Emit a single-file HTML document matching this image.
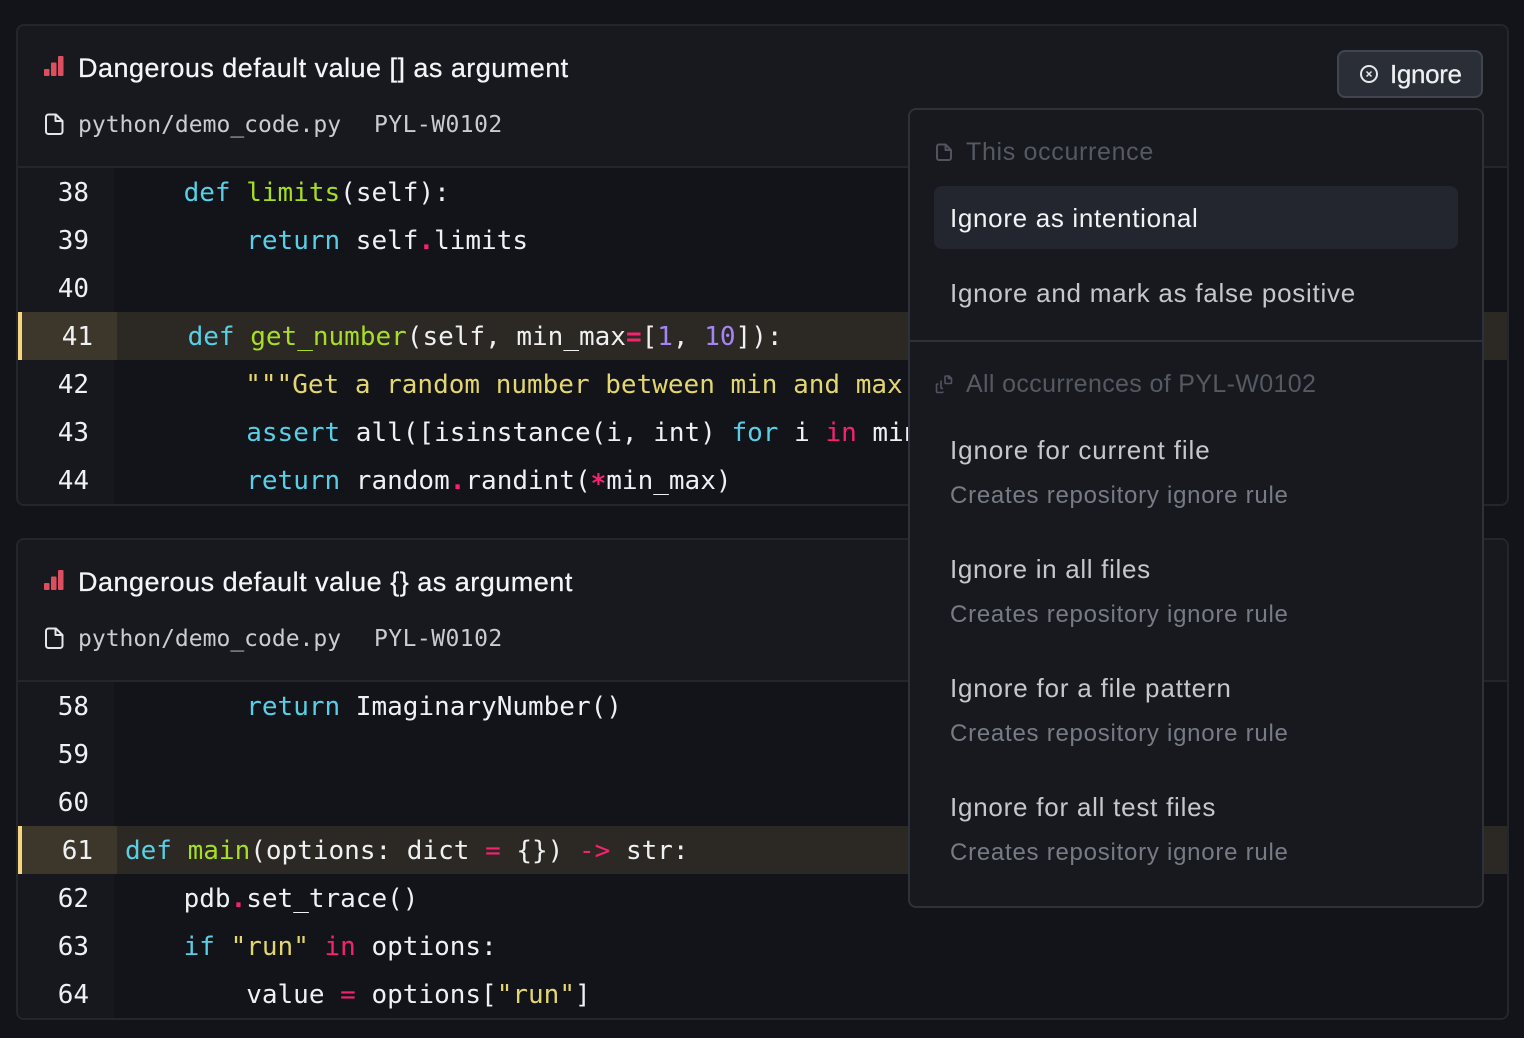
<!DOCTYPE html>
<html lang="en"><head><meta charset="utf-8"><title>Issues</title>
<style>
*{box-sizing:border-box;margin:0;padding:0}
html,body{width:1524px;height:1038px;overflow:hidden;background:#12141a}
body{position:relative;font-family:"Liberation Sans",sans-serif}
.a{position:absolute}
.card{position:absolute;left:16px;width:1493px;height:482px;border:2px solid #23262d;border-radius:8px;overflow:hidden;background:#12141a}
.head{position:absolute;left:0;top:0;width:100%;height:142px;background:#17191f;border-bottom:2px solid #23262d}
.gut{position:absolute;left:0;top:142px;width:96px;bottom:0;background:#16181d}
.hl{position:absolute;left:0;width:100%;height:48px;background:#2c2924}
.hlg{position:absolute;left:0;width:99px;height:48px;background:#3d372b;border-left:4px solid #f6d57f}
.title{position:absolute;left:78px;font-size:27px;line-height:40px;color:#f4f5f6;white-space:nowrap;letter-spacing:.47px;-webkit-text-stroke:.25px #f4f5f6}
.mono{position:absolute;font-family:"DejaVu Sans Mono",monospace;font-size:23px;line-height:40px;color:#c9ccd1;white-space:pre}
.ln,.code{position:absolute;font-family:"DejaVu Sans Mono",monospace;font-size:26px;line-height:48px;white-space:pre;color:#eef0f2}
.ln{width:40px;text-align:right}
.k{color:#58cfe6}.f{color:#a6de23}.p{color:#f5236f;font-weight:bold}.i{color:#f5236f}.n{color:#a585f5}.s{color:#e3d56f}
.st{position:relative;top:3px}
.panel{position:absolute;left:908px;top:108px;width:576px;height:800px;background:#17191f;border:2px solid #2d3139;border-radius:8px}
.ph{position:absolute;left:966px;font-size:25px;line-height:36px;color:#555962;white-space:nowrap;letter-spacing:.6px}
.it{position:absolute;left:950px;font-size:26px;line-height:40px;color:#c5c7cb;white-space:nowrap;letter-spacing:.68px}
.sub{position:absolute;left:950px;font-size:24px;line-height:36px;color:#777b85;white-space:nowrap;letter-spacing:.75px}
svg{position:absolute;overflow:visible}
</style></head><body>

<div class="card" style="top:24px"><div class="head"></div><div class="gut"></div></div>
<div class="card" style="top:538px"><div class="head"></div><div class="gut"></div></div>

<div class="hl" style="top:312px;left:18px;width:1489px"></div><div class="hlg" style="top:312px;left:18px"></div>
<div class="hl" style="top:826px;left:18px;width:1489px"></div><div class="hlg" style="top:826px;left:18px"></div>

<svg style="left:0;top:0" width="1524" height="1038" fill="none">
<g fill="#dc4f5e"><rect x="44" y="69" width="5.500" height="7" rx="1"/><rect x="51" y="62.500" width="5.500" height="13.500" rx="1"/><rect x="58" y="56" width="5.500" height="20" rx="1"/>
<rect x="44" y="583" width="5.500" height="7" rx="1"/><rect x="51" y="576.500" width="5.500" height="13.500" rx="1"/><rect x="58" y="570" width="5.500" height="20" rx="1"/></g>
<g stroke="#e4e6ea" stroke-width="2" stroke-linejoin="round"><path d="M48.500 114.500h7.500l6.500 6.500v10.500a2.500 2.500 0 0 1-2.500 2.500h-11.500a2.500 2.500 0 0 1-2.500-2.500v-14.500a2.500 2.500 0 0 1 2.500-2.500zM55.500 114.500v6.500h7"/>
<path d="M48.500 628.500h7.500l6.500 6.500v10.500a2.500 2.500 0 0 1-2.500 2.500h-11.500a2.500 2.500 0 0 1-2.500-2.500v-14.500a2.500 2.500 0 0 1 2.500-2.500zM55.500 628.500v6.500h7"/></g>
</svg>

<div class="title" style="top:48px">Dangerous default value [] as argument</div>
<div class="mono" style="left:78px;top:105px">python/demo_code.py</div>
<div class="mono" style="left:374px;top:105px;letter-spacing:.45px">PYL-W0102</div>
<div class="title" style="top:562px;letter-spacing:.5px">Dangerous default value {} as argument</div>
<div class="mono" style="left:78px;top:619px">python/demo_code.py</div>
<div class="mono" style="left:374px;top:619px;letter-spacing:.45px">PYL-W0102</div>

<div class="ln" style="left:49px;top:169px">38</div>
<div class="ln" style="left:49px;top:217px">39</div>
<div class="ln" style="left:49px;top:265px">40</div>
<div class="ln" style="left:53px;top:313px">41</div>
<div class="ln" style="left:49px;top:361px">42</div>
<div class="ln" style="left:49px;top:409px">43</div>
<div class="ln" style="left:49px;top:457px">44</div>
<div class="code" style="left:121px;top:169px">    <span class="k">def</span> <span class="f">limits</span>(self):</div>
<div class="code" style="left:121px;top:217px">        <span class="k">return</span> self<span class="p">.</span>limits</div>
<div class="code" style="left:125px;top:313px">    <span class="k">def</span> <span class="f">get_number</span>(self, min_max<span class="p">=</span>[<span class="n">1</span>, <span class="n">10</span>]):</div>
<div class="code" style="left:121px;top:361px">        <span class="s" style="margin-left:-1px">"""</span><span class="s">Get a random number between min and max</span></div>
<div class="code" style="left:121px;top:409px">        <span class="k">assert</span> all([isinstance(i, int) <span class="k">for</span> i <span class="i">in</span> min_max])</div>
<div class="code" style="left:121px;top:457px">        <span class="k">return</span> random<span class="p">.</span>randint(<span class="p st">*</span>min_max)</div>

<div class="ln" style="left:49px;top:683px">58</div>
<div class="ln" style="left:49px;top:731px">59</div>
<div class="ln" style="left:49px;top:779px">60</div>
<div class="ln" style="left:53px;top:827px">61</div>
<div class="ln" style="left:49px;top:875px">62</div>
<div class="ln" style="left:49px;top:923px">63</div>
<div class="ln" style="left:49px;top:971px">64</div>
<div class="code" style="left:121px;top:683px">        <span class="k">return</span> ImaginaryNumber()</div>
<div class="code" style="left:125px;top:827px"><span class="k">def</span> <span class="f">main</span>(options: dict <span class="i">=</span> {}) <span class="i">-&gt;</span> str:</div>
<div class="code" style="left:121px;top:875px">    pdb<span class="p">.</span>set_trace()</div>
<div class="code" style="left:121px;top:923px">    <span class="k">if</span> <span class="s">"run"</span> <span class="i">in</span> options:</div>
<div class="code" style="left:121px;top:971px">        value <span class="i">=</span> options[<span class="s">"run"</span>]</div>

<div class="a" style="left:1337px;top:50px;width:146px;height:48px;background:#2a2e37;border:2px solid #40454f;border-radius:8px"></div>
<svg style="left:0;top:0" width="1524" height="1038" fill="none"><g stroke="#e6e8eb" stroke-width="2"><circle cx="1369" cy="74" r="8"/><path d="M1366.500 71.500l5 5M1371.500 71.500l-5 5" stroke-width="1.500"/></g></svg>
<div class="a" style="left:1390px;top:54px;font-size:26px;line-height:40px;color:#eef0f2;letter-spacing:-.35px;-webkit-text-stroke:.25px #eef0f2">Ignore</div>

<div class="panel"></div>
<div class="a" style="left:934px;top:186px;width:524px;height:63px;background:#23262f;border-radius:8px"></div>
<div class="a" style="left:910px;top:340px;width:572px;height:2px;background:#2d3139"></div>
<svg style="left:0;top:0" width="1524" height="1038" fill="none"><g stroke="#50545e" stroke-width="2" stroke-linejoin="round">
<path d="M939 144.500h6.500l5.500 5.500v8a2 2 0 0 1-2 2h-10a2 2 0 0 1-2-2v-11.500a2 2 0 0 1 2-2zM945.500 144.500v5.500h5.500"/>
<g stroke-width="1.600"><path d="M946 376h3l2.500 2.500v4a1 1 0 0 1-1 1h-4.500a1 1 0 0 1-1-1v-5.500a1 1 0 0 1 1-1zM948.500 376v2.500h3"/>
<path d="M941 380.500v7a1 1 0 0 0 1 1h1"/><path d="M938.500 384h-1a1 1 0 0 0-1 1v6.500a1 1 0 0 0 1 1h4.500a1 1 0 0 0 1-1"/></g>
</g></svg>
<div class="ph" style="top:134px;letter-spacing:.67px">This occurrence</div>
<div class="it" style="top:198px;color:#f1f2f4">Ignore as intentional</div>
<div class="it" style="top:273px;letter-spacing:.74px">Ignore and mark as false positive</div>
<div class="ph" style="top:366px;letter-spacing:.35px">All occurrences of PYL-W0102</div>
<div class="it" style="top:430px;letter-spacing:.9px">Ignore for current file</div>
<div class="sub" style="top:478px">Creates repository ignore rule</div>
<div class="it" style="top:549px">Ignore in all files</div>
<div class="sub" style="top:597px">Creates repository ignore rule</div>
<div class="it" style="top:668px;letter-spacing:.8px">Ignore for a file pattern</div>
<div class="sub" style="top:716px">Creates repository ignore rule</div>
<div class="it" style="top:787px;letter-spacing:.76px">Ignore for all test files</div>
<div class="sub" style="top:835px">Creates repository ignore rule</div>
</body></html>
